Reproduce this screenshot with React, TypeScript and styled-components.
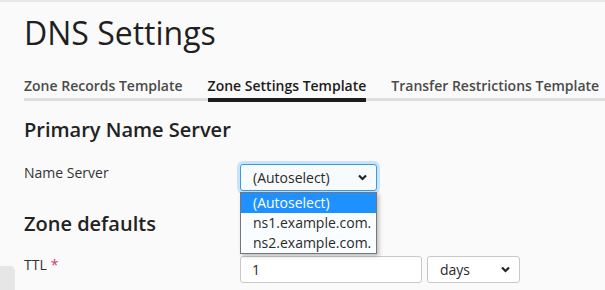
import styled, { createGlobalStyle } from "styled-components";

const GlobalStyle = createGlobalStyle`
  html, body {
    margin: 0;
    padding: 0;
    background: #fafafa;
    font-family: "Open Sans", "Noto Sans", sans-serif;
    color: #222;
  }
`;

const Page = styled.div`
  position: relative;
  width: 605px;
  height: 290px;
  overflow: hidden;
  border-top: 2px solid #e6e6e6;
  box-sizing: border-box;
  padding-left: 24px;
`;

const Title = styled.h1`
  margin: 10px 0 0;
  font-size: 32px;
  font-weight: 400;
  line-height: 42px;
  color: #1f1f1f;
`;

const Tabs = styled.div`
  display: flex;
  gap: 25px;
  margin-top: 22px;
  border-bottom: 3px solid #dedede;
  white-space: nowrap;
`;

const Tab = styled.div<{ active?: boolean }>`
  font-size: 14px;
  font-weight: 600;
  line-height: 20px;
  padding-bottom: 2px;
  color: ${(p) => (p.active ? "#1c1c1c" : "#4a4a4a")};
  border-bottom: 4px solid ${(p) => (p.active ? "#1c1c1c" : "transparent")};
  margin-bottom: -4px;
`;

const SectionHeading = styled.h2<{ gap: number }>`
  margin: ${(p) => p.gap}px 0 0;
  font-size: 20px;
  font-weight: 600;
  line-height: 28px;
  color: #222;
`;

const FormRow = styled.div<{ gap: number }>`
  display: grid;
  grid-template-columns: 216px auto;
  align-items: start;
  justify-items: start;
  margin-top: ${(p) => p.gap}px;
`;

const Label = styled.div`
  font-size: 14px;
  line-height: 18px;
  color: #333;
`;

const Required = styled.span`
  color: #c8416a;
  margin-left: 4px;
`;

const Controls = styled.div`
  display: flex;
  gap: 5px;
`;

const SelectWrap = styled.div`
  position: relative;
`;

const SelectBox = styled.div<{ focused?: boolean; width: number }>`
  box-sizing: border-box;
  width: ${(p) => p.width}px;
  height: 27px;
  display: flex;
  align-items: center;
  justify-content: space-between;
  padding: 0 9px 0 12px;
  font-size: 14px;
  color: #2a2a2a;
  background: ${(p) => (p.focused ? "#f7fbfe" : "#fff")};
  border: 1px solid ${(p) => (p.focused ? "#3a9ae0" : "#c8c8c8")};
  border-radius: 3px;
  box-shadow: ${(p) => (p.focused ? "0 0 0 3px #c9e4f8" : "none")};
`;

const TextInput = styled.div`
  box-sizing: border-box;
  width: 182px;
  height: 27px;
  display: flex;
  align-items: center;
  padding: 0 11px;
  font-size: 14px;
  color: #2a2a2a;
  background: #fff;
  border: 1px solid #c8c8c8;
  border-radius: 3px;
`;

const Listbox = styled.ul`
  position: absolute;
  top: 100%;
  left: 0;
  width: 100%;
  box-sizing: border-box;
  margin: 1px 0 0;
  padding: 0;
  list-style: none;
  background: #fafdff;
  border: 1px solid #767676;
  box-shadow: 2px 2px 4px rgba(0, 0, 0, 0.25);
  z-index: 2;
`;

const Option = styled.li<{ selected?: boolean }>`
  height: 20px;
  line-height: 20px;
  padding: 0 0 0 12px;
  font-size: 14px;
  white-space: nowrap;
  color: ${(p) => (p.selected ? "#fff" : "#2a2a2a")};
  background: ${(p) => (p.selected ? "#1e90ff" : "transparent")};
`;

const Corner = styled.div`
  position: absolute;
  left: 0;
  top: 264px;
  width: 15px;
  height: 40px;
  background: #e6e6e6;
  border-top-right-radius: 5px;
`;

function Chevron() {
  return (
    <svg width="9" height="7" viewBox="0 0 9 7">
      <polyline
        points="1,1.5 4.5,5 8,1.5"
        fill="none"
        stroke="#222"
        strokeWidth="2.2"
      />
    </svg>
  );
}

export default function App() {
  return (
    <>
      <GlobalStyle />
      <Page>
        <Title>DNS Settings</Title>
        <Tabs>
          <Tab>Zone Records Template</Tab>
          <Tab active>Zone Settings Template</Tab>
          <Tab>Transfer Restrictions Template</Tab>
        </Tabs>

        <SectionHeading gap={15}>Primary Name Server</SectionHeading>
        <FormRow gap={20}>
          <Label>Name Server</Label>
          <SelectWrap>
            <SelectBox focused width={137}>
              <span>(Autoselect)</span>
              <Chevron />
            </SelectBox>
            <Listbox>
              <Option selected>(Autoselect)</Option>
              <Option>ns1.example.com.</Option>
              <Option>ns2.example.com.</Option>
            </Listbox>
          </SelectWrap>
        </FormRow>

        <SectionHeading gap={19}>Zone defaults</SectionHeading>
        <FormRow gap={18}>
          <Label>
            TTL<Required>*</Required>
          </Label>
          <Controls>
            <TextInput>1</TextInput>
            <SelectBox width={93}>
              <span>days</span>
              <Chevron />
            </SelectBox>
          </Controls>
        </FormRow>
        <Corner />
      </Page>
    </>
  );
}
